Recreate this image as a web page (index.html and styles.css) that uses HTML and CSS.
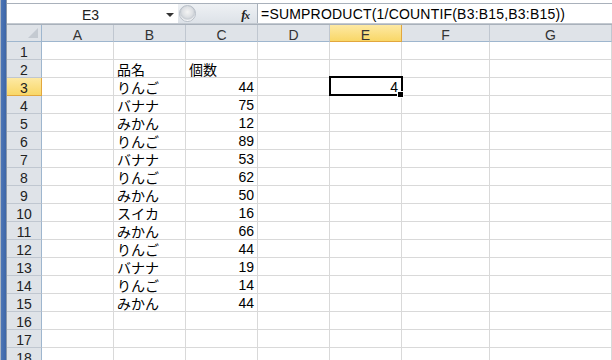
FILE: index.html
```html
<!DOCTYPE html>
<html lang="ja">
<head>
<meta charset="utf-8">
<link rel="stylesheet" href="styles.css">
</head>
<body>
<div class="window">
  <div class="strip"></div>
  <div class="main">
    <div class="fbar">
      <div class="namebox"><span class="ref">E3</span><span class="arrow"></span></div>
      <div class="mid">
        <span class="knob"></span>
        <span class="fx"><i>f</i><i class="x">x</i></span>
      </div>
      <div class="formula">=SUMPRODUCT(1/COUNTIF(B3:B15,B3:B15))</div>
    </div>
    <div class="gap"></div>
    <div class="sheet">
      <div class="corner"><span class="tri"></span></div>
      <div class="ch">A</div><div class="ch">B</div><div class="ch">C</div><div class="ch">D</div><div class="ch sel">E</div><div class="ch">F</div><div class="ch last">G</div>

      <div class="rh">1</div><div class="c"></div><div class="c"></div><div class="c"></div><div class="c"></div><div class="c"></div><div class="c"></div><div class="c"></div>
      <div class="rh">2</div><div class="c"></div><div class="c t">品名</div><div class="c t">個数</div><div class="c"></div><div class="c"></div><div class="c"></div><div class="c"></div>
      <div class="rh sel">3</div><div class="c"></div><div class="c t">りんご</div><div class="c n">44</div><div class="c"></div><div class="c n active">4</div><div class="c"></div><div class="c"></div>
      <div class="rh">4</div><div class="c"></div><div class="c t">バナナ</div><div class="c n">75</div><div class="c"></div><div class="c"></div><div class="c"></div><div class="c"></div>
      <div class="rh">5</div><div class="c"></div><div class="c t">みかん</div><div class="c n">12</div><div class="c"></div><div class="c"></div><div class="c"></div><div class="c"></div>
      <div class="rh">6</div><div class="c"></div><div class="c t">りんご</div><div class="c n">89</div><div class="c"></div><div class="c"></div><div class="c"></div><div class="c"></div>
      <div class="rh">7</div><div class="c"></div><div class="c t">バナナ</div><div class="c n">53</div><div class="c"></div><div class="c"></div><div class="c"></div><div class="c"></div>
      <div class="rh">8</div><div class="c"></div><div class="c t">りんご</div><div class="c n">62</div><div class="c"></div><div class="c"></div><div class="c"></div><div class="c"></div>
      <div class="rh">9</div><div class="c"></div><div class="c t">みかん</div><div class="c n">50</div><div class="c"></div><div class="c"></div><div class="c"></div><div class="c"></div>
      <div class="rh">10</div><div class="c"></div><div class="c t">スイカ</div><div class="c n">16</div><div class="c"></div><div class="c"></div><div class="c"></div><div class="c"></div>
      <div class="rh">11</div><div class="c"></div><div class="c t">みかん</div><div class="c n">66</div><div class="c"></div><div class="c"></div><div class="c"></div><div class="c"></div>
      <div class="rh">12</div><div class="c"></div><div class="c t">りんご</div><div class="c n">44</div><div class="c"></div><div class="c"></div><div class="c"></div><div class="c"></div>
      <div class="rh">13</div><div class="c"></div><div class="c t">バナナ</div><div class="c n">19</div><div class="c"></div><div class="c"></div><div class="c"></div><div class="c"></div>
      <div class="rh">14</div><div class="c"></div><div class="c t">りんご</div><div class="c n">14</div><div class="c"></div><div class="c"></div><div class="c"></div><div class="c"></div>
      <div class="rh">15</div><div class="c"></div><div class="c t">みかん</div><div class="c n">44</div><div class="c"></div><div class="c"></div><div class="c"></div><div class="c"></div>
      <div class="rh">16</div><div class="c"></div><div class="c"></div><div class="c"></div><div class="c"></div><div class="c"></div><div class="c"></div><div class="c"></div>
      <div class="rh">17</div><div class="c"></div><div class="c"></div><div class="c"></div><div class="c"></div><div class="c"></div><div class="c"></div><div class="c"></div>
      <div class="rh">18</div><div class="c"></div><div class="c"></div><div class="c"></div><div class="c"></div><div class="c"></div><div class="c"></div><div class="c"></div>
    </div>
  </div>
</div>
</body>
</html>
```
FILE: styles.css
```css
html, body {
  margin: 0;
  padding: 0;
  width: 612px;
  height: 360px;
  overflow: hidden;
  background: #fff;
}
.window {
  display: flex;
  width: 612px;
  height: 360px;
  font-family: "Noto Sans CJK JP", "Liberation Sans", sans-serif;
  font-size: 14px;
  color: #000;
}
.strip {
  width: 7px;
  flex: none;
  background: linear-gradient(to right, #a9b4c2 0, #a9b4c2 1px, #4d76b6 1px, #3d66a8 6px, #8a98aa 6px);
}
.main {
  flex: 1;
  display: flex;
  flex-direction: column;
  min-width: 0;
}
.fbar {
  display: flex;
  height: 19px;
  margin-top: 3px;
  border-top: 1px solid #a9b1bb;
  background: #fff;
}
.namebox {
  width: 171px;
  display: flex;
  align-items: center;
  background: #fff;
}
.ref {
  flex: 1;
  text-align: center;
  font-family: "Liberation Sans", sans-serif;
  font-size: 14px;
  color: #222;
  padding-left: 8px;
  padding-top: 2px;
}
.arrow {
  width: 0;
  height: 0;
  border-left: 4px solid transparent;
  border-right: 4px solid transparent;
  border-top: 4px solid #333;
  margin-right: 4px;
  margin-top: 3px;
}
.mid {
  width: 79px;
  display: flex;
  align-items: center;
  justify-content: space-between;
  background: linear-gradient(#eef1f4, #dde2e8);
  border-right: 1px solid #a9b1bb;
}
.knob {
  width: 17px;
  height: 17px;
  margin-left: 1px;
  border-radius: 50%;
  background: radial-gradient(circle at 50% 40%, #f4f4f4 0, #dcdfe3 45%, #c9ced4 60%, #ffffff 75%);
  border: 1px solid #b7bec7;
  box-sizing: border-box;
}
.fx {
  font-family: "Liberation Serif", serif;
  font-style: italic;
  font-weight: bold;
  font-size: 13px;
  color: #222;
  margin-right: 8px;
  letter-spacing: -1px;
  padding-top: 2px;
}
.fx .x { font-size: 11px; }
.formula {
  flex: 1;
  padding-left: 3px;
  padding-top: 2px;
  font-family: "Liberation Sans", sans-serif;
  font-size: 14px;
  line-height: 17px;
  letter-spacing: 0.2px;
  white-space: nowrap;
  overflow: hidden;
}
.gap {
  height: 4px;
  background: #dfe3e8;
  border-top: 1px solid #c3c9d0;
  border-bottom: 1px solid #a9b1bb;
  box-sizing: border-box;
}
.sheet {
  display: grid;
  grid-template-columns: 35px 72px 72px 72px 72px 72px 88px 1fr;
  grid-auto-rows: 18px;
  grid-template-rows: 17px;
}
.corner, .ch, .rh {
  background: #dfe3e8;
  color: #333;
  font-family: "Liberation Sans", sans-serif;
  font-size: 14px;
  box-sizing: border-box;
  border-right: 1px solid #9eb6ce;
  border-bottom: 1px solid #9eb6ce;
  display: flex;
  align-items: center;
  justify-content: center;
}
.ch { border-right-color: #c0c7d0; padding-top: 3px; }
.rh { border-bottom-color: #c0c7d0; color: #222; padding-top: 2px; }
.corner { position: relative; }
.tri {
  position: absolute;
  right: 3px;
  bottom: 3px;
  width: 0;
  height: 0;
  border-left: 10px solid transparent;
  border-bottom: 10px solid #c4cad1;
}
.ch.sel, .rh.sel {
  background: linear-gradient(#fde9a4, #f9d767);
  border-color: #e2a73e;
}
.c {
  box-sizing: border-box;
  border-right: 1px solid #d9d9d9;
  border-bottom: 1px solid #d9d9d9;
  line-height: 15px;
  padding: 2px 3px 0;
  white-space: nowrap;
}
.c.t { text-align: left; }
.c.n { text-align: right; font-family: "Liberation Sans", sans-serif; }
.active { position: relative; }
.active::after {
  content: "";
  position: absolute;
  left: -1px;
  top: -2px;
  right: -2px;
  bottom: -1px;
  border: 2px solid #000;
}
.active::before {
  content: "";
  position: absolute;
  right: -3px;
  bottom: -3px;
  width: 5px;
  height: 5px;
  background: #000;
  border: 1px solid #fff;
  z-index: 1;
}
```
